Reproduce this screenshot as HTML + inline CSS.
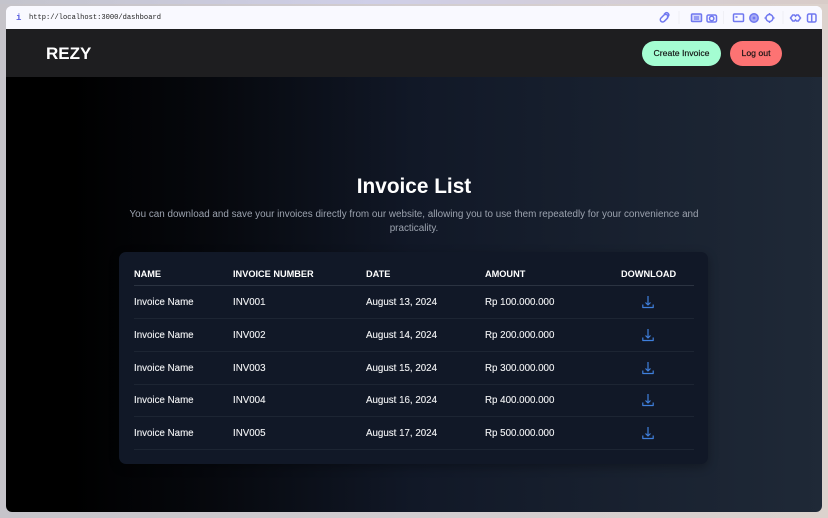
<!DOCTYPE html>
<html><head><meta charset="utf-8"><style>
*{box-sizing:border-box;margin:0;padding:0}
html,body{width:828px;height:518px;overflow:hidden;background:#cfc9cb}
body{position:relative;font-family:"Liberation Sans",sans-serif;color:#fff}
.t{position:absolute;white-space:nowrap;line-height:14px}
.frame{position:absolute;left:0;top:0;width:828px;height:518px;background:linear-gradient(90deg,#c6c4ca,#d2cdd0 50%,#dcd2cd)}
.top{position:absolute;left:0;top:0;width:828px;height:4px;background:linear-gradient(90deg,#c4c4cc,#cfcfe8 45%,#d8ccc8)}
.win{position:absolute;left:6px;top:6px;width:816px;height:506px;border-radius:6px;overflow:hidden;background:#fff}
.addr{position:absolute;left:0;top:0;width:816px;height:23px;background:#f9f9ff}
.main{position:absolute;left:0;top:23px;width:816px;height:483px;background:linear-gradient(90deg,#000 0%,#000 8%,#06080d 25%,#111827 50%,#1f2937 100%)}
.nav{position:absolute;left:0;top:0;width:816px;height:48px;background:#1e1e20}
.card{position:absolute;left:113px;top:223px;width:589px;height:212px;background:#111827;border-radius:7px;box-shadow:0 3px 10px rgba(0,0,0,.3)}
.btn{position:absolute;top:12px;height:25px;border-radius:13px;color:#111;font-size:8.7px;line-height:25px;text-align:center;font-weight:400;-webkit-text-stroke:.15px #111}
.h{font-size:9.2px;font-weight:700;color:#fff;top:15px}
.c{font-size:9.75px;color:#f0f1f3;-webkit-text-stroke:.12px #f0f1f3}
.ln{position:absolute;left:15px;width:560px;height:1px;background:#1d2533}
svg{position:absolute;overflow:visible}
.ic{fill:none;stroke:#7078f0;stroke-width:1.5}
.dl{fill:none;stroke:#3f7fdc;stroke-width:1.2;stroke-linejoin:round}
</style></head><body>
<div class="frame"></div><div class="top"></div>
<div class="win">
<div class="addr">
<div class="t" style="left:10px;top:5px;font:700 9px/14px 'Liberation Mono',monospace;color:#5a5fe0">i</div>
<div class="t" style="left:23px;top:5px;font:7.1px/14px 'Liberation Mono',monospace;color:#222">http://localhost:3000/dashboard</div>
<svg style="left:0;top:0" width="816" height="23" class="ic">
<path d="M655 12l3-3a2.300 2.300 0 0 1 3.300 3.300l-3 3a2.300 2.300 0 0 1-3.300-3.300z M658 8.500l1.500-1.500a2.200 2.200 0 0 1 3 3l-1.500 1.500"/>
<path d="M673 5v13M717.500 5v13M777 5v13" stroke="#f0f0f6" stroke-width="1"/>
<rect x="685.500" y="8" width="10" height="7.500" rx="1" fill="#d6d8fb"/><path d="M688 11h5M688 13h5" stroke-width="1.200"/>
<rect x="701" y="9" width="9.500" height="7" rx="1.500"/><circle cx="705.700" cy="12.500" r="2.200"/>
<rect x="727.500" y="8" width="10" height="7.500" rx="1"/><path d="M729.500 11h2"/>
<circle cx="748" cy="12" r="4.200" fill="#a8abf6"/><circle cx="748" cy="12" r="1.400" fill="#7078f0" stroke="none"/>
<circle cx="763.500" cy="12" r="3.500"/><path d="M763.500 7v1.500M763.500 15.500v1.500M758.500 12h1.500M767 12h1.500"/>
<path d="M784.500 12l2.200-3h1.800l1 1.200 1-1.200h1.800l2.200 3-2.200 3h-1.800l-1-1.200-1 1.200h-1.800z"/>
<rect x="801.500" y="8" width="8.500" height="8" rx="1.500"/><path d="M805.700 8v8"/>
</svg>
</div>
<div class="main">
<div class="nav">
<div class="t" style="left:40px;top:15px;font-size:17px;line-height:20px;font-weight:700">REZY</div>
<div class="btn" style="left:636px;width:79px;background:#a4fdd2">Create Invoice</div>
<div class="btn" style="left:724px;width:52px;background:#fd7373">Log out</div>
</div>
<div class="t" style="left:0;width:816px;text-align:center;top:145px;font-size:20.8px;line-height:26px;font-weight:700">Invoice List</div>
<div class="t" style="left:0;width:816px;text-align:center;top:179px;font-size:9.87px;color:#9ca3af">You can download and save your invoices directly from our website, allowing you to use them repeatedly for your convenience and</div>
<div class="t" style="left:0;width:816px;text-align:center;top:193px;font-size:9.87px;color:#9ca3af">practicality.</div>
<div class="card">
<div class="t h" style="left:15px">NAME</div>
<div class="t h" style="left:114px">INVOICE NUMBER</div>
<div class="t h" style="left:247px">DATE</div>
<div class="t h" style="left:366px">AMOUNT</div>
<div class="t h" style="left:502px">DOWNLOAD</div>
<div class="ln" style="top:33px;background:#2b3341"></div>
<div class="t c" style="left:15px;top:44px">Invoice Name</div><div class="t c" style="left:114px;top:44px">INV001</div><div class="t c" style="left:247px;top:44px">August 13, 2024</div><div class="t c" style="left:366px;top:44px">Rp 100.000.000</div>
<div class="ln" style="top:66px"></div>
<div class="t c" style="left:15px;top:77px">Invoice Name</div><div class="t c" style="left:114px;top:77px">INV002</div><div class="t c" style="left:247px;top:77px">August 14, 2024</div><div class="t c" style="left:366px;top:77px">Rp 200.000.000</div>
<div class="ln" style="top:99px"></div>
<div class="t c" style="left:15px;top:110px">Invoice Name</div><div class="t c" style="left:114px;top:110px">INV003</div><div class="t c" style="left:247px;top:110px">August 15, 2024</div><div class="t c" style="left:366px;top:110px">Rp 300.000.000</div>
<div class="ln" style="top:132px"></div>
<div class="t c" style="left:15px;top:142px">Invoice Name</div><div class="t c" style="left:114px;top:142px">INV004</div><div class="t c" style="left:247px;top:142px">August 16, 2024</div><div class="t c" style="left:366px;top:142px">Rp 400.000.000</div>
<div class="ln" style="top:164px"></div>
<div class="t c" style="left:15px;top:175px">Invoice Name</div><div class="t c" style="left:114px;top:175px">INV005</div><div class="t c" style="left:247px;top:175px">August 17, 2024</div><div class="t c" style="left:366px;top:175px">Rp 500.000.000</div>
<div class="ln" style="top:197px"></div>
<svg style="left:0;top:0" width="589" height="212" class="dl">
<path d="M529 44v9M526.500 50.500l2.500 2.500 2.500-2.500M523.800 52.500v3h10.400v-3"/>
<path d="M529 77v9M526.500 83.500l2.500 2.500 2.500-2.500M523.800 85.500v3h10.400v-3"/>
<path d="M529 110v9M526.500 116.500l2.500 2.500 2.500-2.500M523.800 118.500v3h10.400v-3"/>
<path d="M529 142v9M526.500 148.500l2.500 2.500 2.500-2.500M523.800 150.500v3h10.400v-3"/>
<path d="M529 175v9M526.500 181.500l2.500 2.500 2.500-2.500M523.800 183.500v3h10.400v-3"/>
</svg>
</div>
</div>
</div>
</body></html>
